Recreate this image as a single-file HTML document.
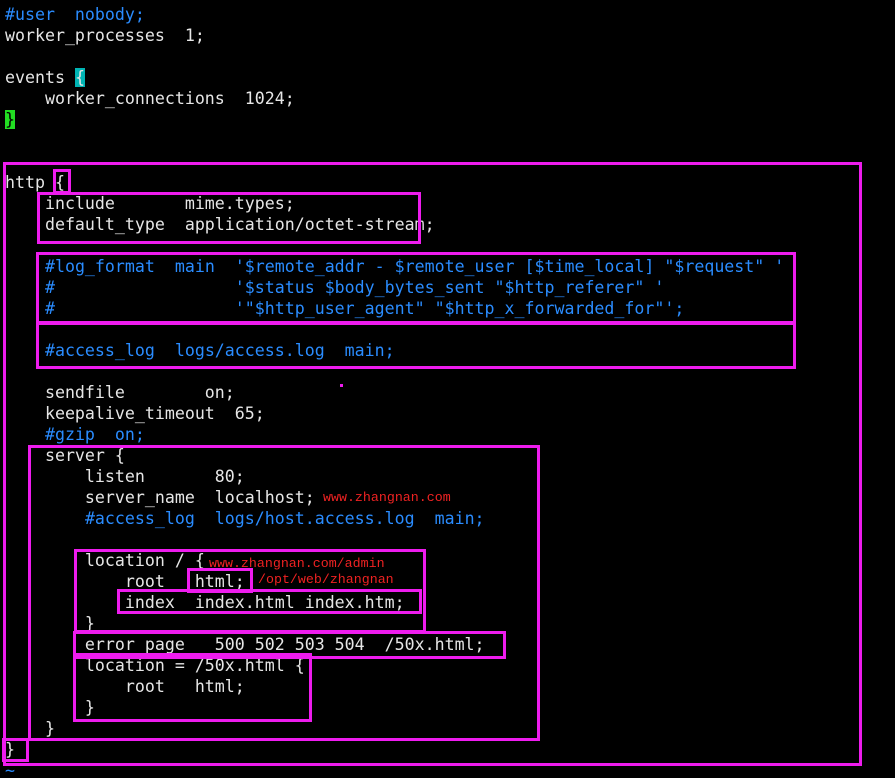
<!DOCTYPE html>
<html><head><meta charset="utf-8"><style>
html,body{margin:0;padding:0;background:#000;width:895px;height:778px;overflow:hidden;position:relative}
pre{position:absolute;left:5px;top:4px;margin:0;font-family:"DejaVu Sans Mono","Liberation Mono",monospace;font-size:16.6px;line-height:21px;color:#e6e6e6}
.c{color:#2a8cff}
.cy{background:#00b4b4;color:#e6e6e6}
.gr{background:#22dd22;color:#000}
.b{position:absolute;border:3px solid #ee1cee;box-sizing:border-box}
.r{position:absolute;font-family:"Liberation Mono",monospace;font-size:13.3px;color:#ee2222;line-height:14px}
</style></head><body>
<pre><span class="c">#user  nobody;</span>
worker_processes  1;

events <span class="cy">{</span>
    worker_connections  1024;
<span class="gr">}</span>


http {
    include       mime.types;
    default_type  application/octet-stream;

    <span class="c">#log_format  main  '$remote_addr - $remote_user [$time_local] "$request" '</span>
    <span class="c">#                  '$status $body_bytes_sent "$http_referer" '</span>
    <span class="c">#                  '"$http_user_agent" "$http_x_forwarded_for"';</span>

    <span class="c">#access_log  logs/access.log  main;</span>

    sendfile        on;
    keepalive_timeout  65;
    <span class="c">#gzip  on;</span>
    server {
        listen       80;
        server_name  localhost;
        <span class="c">#access_log  logs/host.access.log  main;</span>

        location / {
            root   html;
            index  index.html index.htm;
        }
        error_page   500 502 503 504  /50x.html;
        location = /50x.html {
            root   html;
        }
    }
}
<span class="c">~</span></pre>
<div class="b" style="left:3px;top:162px;width:859px;height:604px"></div>
<div class="b" style="left:53px;top:169px;width:18px;height:25px"></div>
<div class="b" style="left:37px;top:192px;width:384px;height:52px"></div>
<div class="b" style="left:36px;top:252px;width:760px;height:72px"></div>
<div class="b" style="left:36px;top:322px;width:760px;height:47px"></div>
<div style="position:absolute;left:340px;top:384px;width:3px;height:3px;background:#ee1cee"></div>
<div class="b" style="left:28px;top:445px;width:512px;height:296px"></div>
<div class="b" style="left:74px;top:549px;width:352px;height:84px"></div>
<div class="b" style="left:187px;top:568px;width:66px;height:25px"></div>
<div class="b" style="left:117px;top:589px;width:305px;height:25px"></div>
<div class="b" style="left:73px;top:631px;width:433px;height:28px"></div>
<div class="b" style="left:73px;top:653px;width:239px;height:69px"></div>
<div class="b" style="left:2px;top:738px;width:27px;height:24px"></div>
<div class="r" style="left:323px;top:491px">www.zhangnan.com</div>
<div class="r" style="left:209px;top:557px">www.zhangnan.com/admin</div>
<div class="r" style="left:258px;top:573px">/opt/web/zhangnan</div>
</body></html>
